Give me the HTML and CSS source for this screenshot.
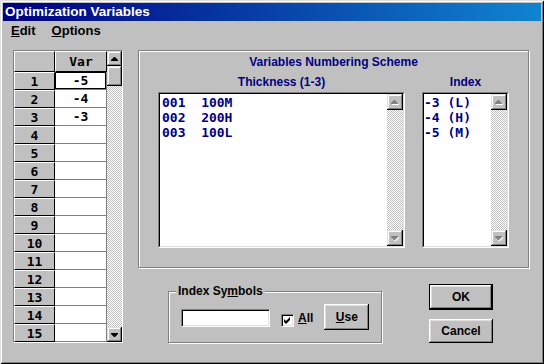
FILE: index.html
```html
<!DOCTYPE html>
<html lang="en">
<head>
  <meta charset="UTF-8" />
  <title>Optimization Variables</title>
  <link rel="stylesheet" href="styles.css">
</head>
<body>
  <div class="window">
    <div class="titlebar">Optimization Variables</div>
    <div class="menubar">
      <span class="menu"><u>E</u>dit</span>
      <span class="menu"><u>O</u>ptions</span>
    </div>

    <div class="content">
      <!-- variable grid -->
      <div class="grid">
        <div class="cells">
          <div class="head"></div><div class="head">Var</div>
          <div class="rowhead">1</div><div class="cell sel">-5</div>
          <div class="rowhead">2</div><div class="cell">-4</div>
          <div class="rowhead">3</div><div class="cell">-3</div>
          <div class="rowhead">4</div><div class="cell"></div>
          <div class="rowhead">5</div><div class="cell"></div>
          <div class="rowhead">6</div><div class="cell"></div>
          <div class="rowhead">7</div><div class="cell"></div>
          <div class="rowhead">8</div><div class="cell"></div>
          <div class="rowhead">9</div><div class="cell"></div>
          <div class="rowhead">10</div><div class="cell"></div>
          <div class="rowhead">11</div><div class="cell"></div>
          <div class="rowhead">12</div><div class="cell"></div>
          <div class="rowhead">13</div><div class="cell"></div>
          <div class="rowhead">14</div><div class="cell"></div>
          <div class="rowhead">15</div><div class="cell"></div>
        </div>
        <div class="vscroll grid-scroll">
          <div class="sbtn"><svg width="7" height="4" viewBox="0 0 7 4"><polygon points="3,0 4,0 7,3 7,4 0,4 0,3" fill="#000"/></svg></div>
          <div class="thumb"></div>
          <div class="track"></div>
          <div class="sbtn"><svg width="7" height="4" viewBox="0 0 7 4"><polygon points="0,0 7,0 7,1 4,4 3,4 0,1" fill="#000"/></svg></div>
        </div>
      </div>

      <div class="side">
        <div class="scheme">
          <div class="scheme-title">Variables Numbering Scheme</div>
          <div class="lists">
            <div class="col col-thick">
              <div class="col-head">Thickness (1-3)</div>
              <div class="listbox">
                <div class="listbox-in">
                  <div class="items items-thick">
                    <div class="item">001  100M</div>
                    <div class="item">002  200H</div>
                    <div class="item">003  100L</div>
                  </div>
                  <div class="vscroll">
                    <div class="sbtn"><svg width="8" height="5" viewBox="0 0 8 5"><polygon points="4,1 5,1 8,4 8,5 1,5 1,4" fill="#fff"/><polygon points="3,0 4,0 7,3 7,4 0,4 0,3" fill="#808080"/></svg></div>
                    <div class="track"></div>
                    <div class="sbtn"><svg width="8" height="5" viewBox="0 0 8 5"><polygon points="1,1 8,1 8,2 5,5 4,5 1,2" fill="#fff"/><polygon points="0,0 7,0 7,1 4,4 3,4 0,1" fill="#808080"/></svg></div>
                  </div>
                </div>
              </div>
            </div>
            <div class="col col-index">
              <div class="col-head">Index</div>
              <div class="listbox">
                <div class="listbox-in">
                  <div class="items">
                    <div class="item">-3 (L)</div>
                    <div class="item">-4 (H)</div>
                    <div class="item">-5 (M)</div>
                  </div>
                  <div class="vscroll">
                    <div class="sbtn"><svg width="8" height="5" viewBox="0 0 8 5"><polygon points="4,1 5,1 8,4 8,5 1,5 1,4" fill="#fff"/><polygon points="3,0 4,0 7,3 7,4 0,4 0,3" fill="#808080"/></svg></div>
                    <div class="track"></div>
                    <div class="sbtn"><svg width="8" height="5" viewBox="0 0 8 5"><polygon points="1,1 8,1 8,2 5,5 4,5 1,2" fill="#fff"/><polygon points="0,0 7,0 7,1 4,4 3,4 0,1" fill="#808080"/></svg></div>
                  </div>
                </div>
              </div>
            </div>
          </div>
        </div>

        <div class="bottom">
          <div class="symbols">
            <span class="legend">Index Sy<u>m</u>bols</span>
            <div class="textbox"></div>
            <span class="checkbox"><svg width="7" height="7" viewBox="0 0 7 7"><polygon points="0,2 2,4 6,0 6,3 2,7 0,5" fill="#000"/></svg></span>
            <span class="check-label"><u>A</u>ll</span>
            <div class="btn btn-use"><u>U</u>se</div>
          </div>
          <div class="actions">
            <div class="btn btn-default">OK</div>
            <div class="btn">Cancel</div>
          </div>
        </div>
      </div>
    </div>
  </div>
</body>
</html>
```

FILE: styles.css
```css
body {
  margin: 0;
  font-family: "Liberation Sans", Arial, sans-serif;
  background: #c0c0c0;
}
.window {
  width: 544px;
  height: 364px;
  box-sizing: border-box;
  padding: 3px;
  background: #c0c0c0;
  box-shadow: inset 1px 1px #dfdfdf, inset -1px -1px #000, inset 2px 2px #fff, inset -2px -2px #808080;
}
.titlebar {
  height: 18px;
  line-height: 18px;
  padding-left: 2px;
  color: #fff;
  font-weight: bold;
  font-size: 13.5px;
  background: linear-gradient(to right, #000080, #1084d0);
}
.menubar {
  display: flex;
  height: 19px;
  line-height: 19px;
  font-size: 13px;
  font-weight: bold;
}
.menu { padding: 0 8px; }
.content {
  display: flex;
  padding: 10px 0 0 10px;
}

/* grid */
.grid {
  display: flex;
  border: 1px solid;
  border-color: #808080 #fff #fff #808080;
}
.cells {
  display: grid;
  grid-template-columns: 41px 52px;
  grid-template-rows: 21px repeat(15, 18px);
  font-family: "DejaVu Sans Mono", monospace;
  font-weight: bold;
  font-size: 13px;
}
.head, .rowhead, .cell {
  display: flex;
  align-items: center;
  justify-content: center;
  box-sizing: border-box;
}
.head, .rowhead {
  border: 1px solid;
  border-color: #fff #000 #000 #fff;
}
.cell {
  background: #fff;
  border-right: 1px solid #808080;
  border-bottom: 1px solid #808080;
}
.cell.sel { box-shadow: inset 0 0 0 1px #000, inset 1px 1px #000; }

/* scrollbars */
.vscroll {
  display: flex;
  flex-direction: column;
  width: 16px;
}
.grid-scroll { width: 15px; }
.grid-scroll .sbtn { height: 15px; }
.sbtn, .thumb {
  height: 16px;
  display: flex;
  align-items: center;
  justify-content: center;
  background: #c0c0c0;
  box-shadow: inset -1px -1px #000, inset 1px 1px #dfdfdf, inset -2px -2px #808080, inset 2px 2px #fff;
}
.thumb { height: 20px; }
.track {
  flex: 1;
  background: repeating-conic-gradient(#c0c0c0 0 25%, #fff 0 50%) 0 0 / 2px 2px;
}

/* numbering scheme */
.side { margin-left: 15px; }
.scheme {
  width: 391px;
  height: 218px;
  box-sizing: border-box;
  border: 1px solid #808080;
  box-shadow: inset 1px 1px #fff, 1px 1px #fff;
  padding: 4px 19px 0 19px;
  color: #000080;
  font-weight: bold;
  font-size: 12px;
}
.scheme-title { text-align: center; line-height: 14px; }
.lists {
  display: flex;
  gap: 17px;
  margin-top: 6px;
}
.col-thick { width: 247px; }
.col-index { width: 87px; }
.col-head {
  text-align: center;
  line-height: 14px;
  margin-bottom: 3px;
}
.listbox {
  height: 156px;
  box-sizing: border-box;
  border: 1px solid;
  border-color: #808080 #fff #fff #808080;
}
.listbox-in {
  display: flex;
  height: 100%;
  box-sizing: border-box;
  background: #fff;
  border: 1px solid;
  border-color: #000 #dfdfdf #dfdfdf #000;
}
.items {
  flex: 1;
  padding-top: 1px;
  font-family: "DejaVu Sans Mono", monospace;
  font-size: 13px;
  line-height: 15px;
}
.item { white-space: pre; }
.items-thick { padding-left: 2px; }

/* bottom row */
.bottom {
  display: flex;
  margin-top: 16px;
  font-size: 12px;
  font-weight: bold;
}
.symbols {
  position: relative;
  display: flex;
  align-items: center;
  width: 214px;
  height: 52px;
  box-sizing: border-box;
  margin: 7px 0 0 30px;
  padding-left: 12px;
  border: 1px solid #808080;
  box-shadow: inset 1px 1px #fff, 1px 1px #fff;
}
.legend {
  position: absolute;
  top: -8px;
  left: 7px;
  padding: 0 2px;
  line-height: 14px;
  background: #c0c0c0;
}
.textbox {
  width: 89px;
  height: 18px;
  margin-top: 2px;
  box-sizing: border-box;
  background: #fff;
  border: 1px solid;
  border-color: #808080 #fff #fff #808080;
  box-shadow: inset 1px 1px #000, inset -1px -1px #dfdfdf;
}
.checkbox {
  display: flex;
  align-items: center;
  justify-content: center;
  width: 13px;
  height: 13px;
  margin: 6px 0 0 11px;
  box-sizing: border-box;
  background: #fff;
  border: 1px solid;
  border-color: #808080 #fff #fff #808080;
  box-shadow: inset 1px 1px #000, inset -1px -1px #dfdfdf;
}
.check-label { margin: 2px 0 0 4px; }
.btn {
  display: flex;
  align-items: center;
  justify-content: center;
  width: 64px;
  height: 24px;
  box-sizing: border-box;
  background: #c0c0c0;
  box-shadow: inset -1px -1px #000, inset 1px 1px #fff, inset -2px -2px #808080, inset 2px 2px #dfdfdf;
}
.btn-use {
  width: 45px;
  height: 26px;
  margin-left: 11px;
}
.actions {
  display: flex;
  flex-direction: column;
  gap: 9px;
  margin-left: 47px;
}
.btn-default {
  height: 26px;
  border: 1px solid #000;
}
```
